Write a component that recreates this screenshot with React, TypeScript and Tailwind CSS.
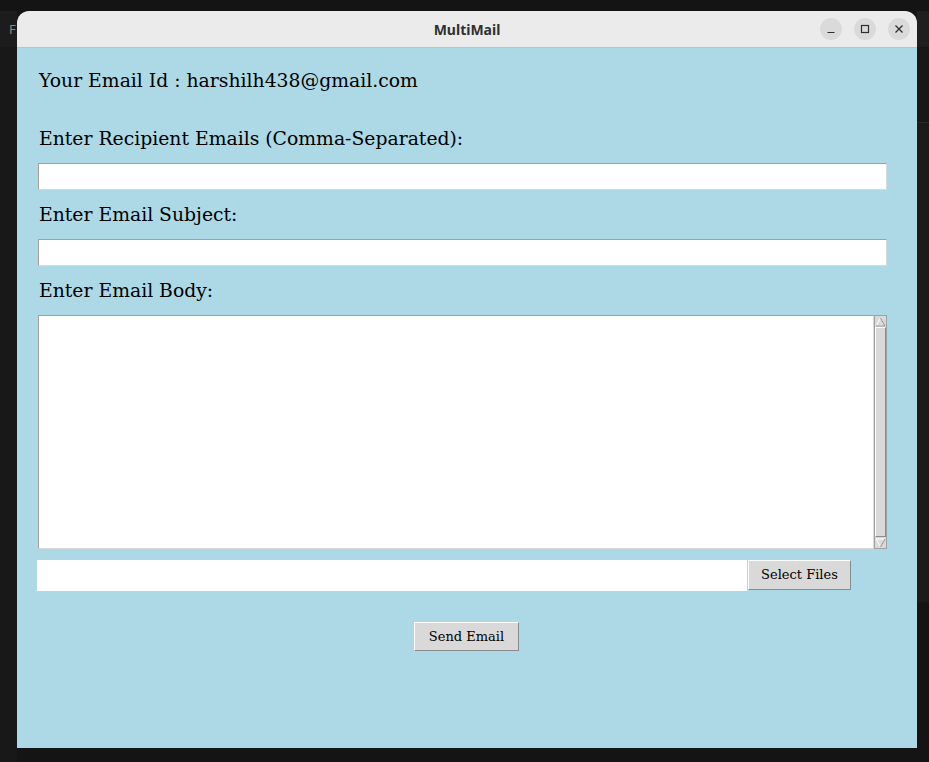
export default function App() {
  const serif = { fontFamily: '"DejaVu Serif", "Liberation Serif", serif' };
  return (
    <div className="relative w-[929px] h-[762px] overflow-hidden bg-[#141414]">
      {/* desktop behind the window */}
      <div className="absolute left-0 top-[11px] w-[17px] h-[36px] bg-[#1c1c1c] text-[#888] text-[13px] pl-[9px] leading-[36px]" style={{ fontFamily: '"Noto Sans", sans-serif' }}>F</div>
      <div className="absolute left-0 top-[47px] w-[17px] h-[715px] bg-[#181818]" />
      <div className="absolute left-[917px] top-[11px] w-[12px] h-[36px] bg-[#1f1f1f]" />
      <div className="absolute left-[917px] top-[47px] w-[12px] h-[75px] bg-[#181818]" />
      <div className="absolute left-[917px] top-[122px] w-[12px] h-[480px] bg-[#1b1b1b] border-t border-[#2a2a2a]" />

      {/* window */}
      <div className="absolute left-[17px] top-[11px] w-[900px] h-[737px] flex flex-col rounded-t-[12px] overflow-hidden">
        <div className="h-[37px] shrink-0 bg-[#ebebeb] border-b border-[#c0c0c0] relative flex items-center justify-center">
          <span className="text-[14px] font-bold text-[#303030]" style={{ fontFamily: '"Noto Sans", sans-serif' }}>MultiMail</span>
          <div className="absolute right-[7px] top-[7px] flex gap-[12px]">
            <div className="w-[22px] h-[22px] rounded-full bg-[#dadada] flex items-center justify-center">
              <svg width="10" height="10" viewBox="0 0 10 10"><path d="M1.5 8.5h7" stroke="#2e2e2e" strokeWidth="1.2" /></svg>
            </div>
            <div className="w-[22px] h-[22px] rounded-full bg-[#dadada] flex items-center justify-center">
              <svg width="10" height="10" viewBox="0 0 10 10"><rect x="1.5" y="1.5" width="7" height="7" fill="none" stroke="#2e2e2e" strokeWidth="1.2" /></svg>
            </div>
            <div className="w-[22px] h-[22px] rounded-full bg-[#dadada] flex items-center justify-center">
              <svg width="10" height="10" viewBox="0 0 10 10"><path d="M1.5 1.5l7 7M8.5 1.5l-7 7" stroke="#2e2e2e" strokeWidth="1.3" /></svg>
            </div>
          </div>
        </div>

        <div className="flex-1 bg-[#add8e6] flex flex-col text-black" style={serif}>
          <div className="mt-[21px] ml-[22px] h-[24px] leading-[24px] text-[18.8px]">Your Email Id : harshilh438@gmail.com</div>

          <div className="mt-[34px] ml-[22px] h-[24px] leading-[24px] text-[18.8px]">Enter Recipient Emails (Comma-Separated):</div>
          <div className="mt-[12px] ml-[21px] w-[849px] h-[27px] bg-white border border-t-[#a0a0a0] border-l-[#a0a0a0] border-b-[#d9d9d9] border-r-[#d9d9d9]" />

          <div className="mt-[13px] ml-[22px] h-[24px] leading-[24px] text-[18.8px]">Enter Email Subject:</div>
          <div className="mt-[12px] ml-[21px] w-[849px] h-[27px] bg-white border border-t-[#a0a0a0] border-l-[#a0a0a0] border-b-[#d9d9d9] border-r-[#d9d9d9]" />

          <div className="mt-[13px] ml-[22px] h-[24px] leading-[24px] text-[18.8px]">Enter Email Body:</div>
          <div className="mt-[12px] ml-[21px] w-[849px] h-[234px] flex">
            <div className="flex-1 bg-white border border-t-[#a0a0a0] border-l-[#a0a0a0] border-b-[#d9d9d9] border-r-[#d9d9d9]" />
            <div className="w-[13px] bg-[#c3c3c3] flex flex-col border border-[#a0a0a0]">
              <div className="h-[11px] bg-[#d9d9d9] flex items-center justify-center">
                <svg width="11" height="10" viewBox="0 0 11 10"><path d="M5.5 1L1 9h9z" fill="#dcdcdc" stroke="#fff" strokeWidth="1" /><path d="M1 9h9L5.5 1" fill="none" stroke="#8c8c8c" strokeWidth="1" /></svg>
              </div>
              <div className="flex-1 bg-[#d9d9d9] border border-t-white border-l-white border-b-[#8c8c8c] border-r-[#8c8c8c]" />
              <div className="h-[11px] bg-[#d9d9d9] flex items-center justify-center">
                <svg width="11" height="10" viewBox="0 0 11 10"><path d="M1 1h9L5.5 9z" fill="#dcdcdc" stroke="#fff" strokeWidth="1" /><path d="M10 1L5.5 9" fill="none" stroke="#8c8c8c" strokeWidth="1" /></svg>
              </div>
            </div>
          </div>

          <div className="mt-[11px] ml-[20px] flex items-start">
            <div className="w-[710px] h-[31px] bg-white" />
            <button className="ml-[1px] w-[103px] h-[30px] bg-[#d9d9d9] text-[13px] border border-t-white border-l-white border-b-[#8a8a8a] border-r-[#8a8a8a]" style={serif}>Select Files</button>
          </div>

          <div className="mt-[31px] flex justify-center">
            <button className="ml-[-1px] w-[105px] h-[29px] bg-[#d9d9d9] text-[13px] border border-t-white border-l-white border-b-[#8a8a8a] border-r-[#8a8a8a]" style={serif}>Send Email</button>
          </div>
        </div>
      </div>
    </div>
  );
}
